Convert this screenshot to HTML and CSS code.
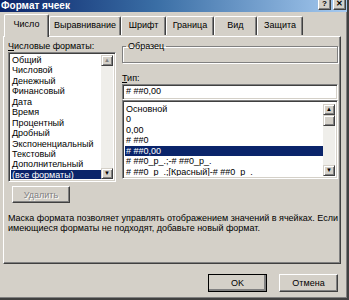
FILE: index.html
```html
<!DOCTYPE html>
<html lang="ru">
<head>
    <meta charset="UTF-8">
    <title>Формат ячеек</title>
    <link rel="stylesheet" href="styles.css">
</head>
<body>
<div class="window">
    <!-- Заголовок окна -->
    <div class="titlebar">
        <span class="title">Формат ячеек</span>
        <div class="tb-btns">
            <span class="tb-btn">?</span>
            <span class="tb-btn">✕</span>
        </div>
    </div>

    <!-- Вкладки -->
    <div class="tabs">
        <div class="tab active" style="width: 45px">Число</div>
        <div class="tab" style="width: 72px">Выравнивание</div>
        <div class="tab" style="width: 45px">Шрифт</div>
        <div class="tab" style="width: 48px">Граница</div>
        <div class="tab" style="width: 43px">Вид</div>
        <div class="tab" style="width: 46px">Защита</div>
    </div>

    <div class="panel">
        <div class="cols">
            <div class="left">
                <div class="label"><u>Ч</u>исловые форматы:</div>
                <div class="listbox sunken cat-list">
                    <ul class="items">
                        <li>Общий</li>
                        <li>Числовой</li>
                        <li>Денежный</li>
                        <li>Финансовый</li>
                        <li>Дата</li>
                        <li>Время</li>
                        <li>Процентный</li>
                        <li>Дробный</li>
                        <li>Экспоненциальный</li>
                        <li>Текстовый</li>
                        <li>Дополнительный</li>
                        <li class="sel">(все форматы)</li>
                    </ul>
                    <div class="vscroll">
                        <span class="arrow disabled">▲</span>
                        <span class="track"></span>
                        <span class="arrow">▼</span>
                    </div>
                </div>
                <button class="btn del" disabled>Удалить</button>
            </div>

            <div class="right">
                <fieldset class="sample">
                    <legend>Образец</legend>
                </fieldset>
                <div class="label type-label"><u>Т</u>ип:</div>
                <div class="input sunken"># ##0,00</div>
                <div class="listbox sunken fmt-list">
                    <ul class="items">
                        <li>Основной</li>
                        <li>0</li>
                        <li>0,00</li>
                        <li># ##0</li>
                        <li class="sel"># ##0,00</li>
                        <li># ##0_р_.;-# ##0_р_.</li>
                        <li># ##0_р_.;[Красный]-# ##0_р_.</li>
                    </ul>
                    <div class="vscroll">
                        <span class="arrow">▲</span>
                        <span class="thumb"></span>
                        <span class="track"></span>
                        <span class="arrow">▼</span>
                    </div>
                </div>
            </div>
        </div>

        <p class="desc">Маска формата позволяет управлять отображением значений в ячейках. Если имеющиеся форматы не подходят, добавьте новый формат.</p>
    </div>

    <div class="actions">
        <button class="btn default">OK</button>
        <button class="btn">Отмена</button>
    </div>
</div>
</body>
</html>
```

FILE: styles.css
```css
body {
    margin: 0;
    font-family: "Liberation Sans", Arial, sans-serif;
    font-size: 9px;
    color: #000;
}

.window {
    width: 347px;
    height: 298px;
    background-color: #d4d0c8;
    border-right: 2px solid #404040;
    border-bottom: 2px solid #404040;
    box-shadow: inset -1px -1px #808080;
    display: flex;
    flex-direction: column;
    overflow: hidden;
}

/* заголовок */
.titlebar {
    height: 12px;
    flex-shrink: 0;
    background: linear-gradient(to right, #0a246a, #3a6ea5 45%, #a6caf0);
    display: flex;
    justify-content: space-between;
    align-items: flex-start;
    overflow: hidden;
}

.title {
    color: white;
    font-weight: bold;
    font-size: 10px;
    line-height: 11px;
    padding-left: 1px;
}

.tb-btns {
    display: flex;
    gap: 2px;
    padding-right: 1px;
}

.tb-btn {
    width: 11px;
    height: 9px;
    background-color: #d4d0c8;
    border-right: 1px solid #404040;
    border-bottom: 1px solid #404040;
    border-left: 1px solid #fff;
    box-shadow: inset -1px -1px #808080;
    font-size: 8px;
    font-weight: bold;
    line-height: 8px;
    text-align: center;
    color: #000;
}

/* вкладки */
.tabs {
    display: flex;
    align-items: flex-end;
    height: 23px;
    margin-top: 1px;
    padding-left: 4px;
    flex-shrink: 0;
}

.tab {
    height: 19px;
    box-sizing: border-box;
    border-top: 1px solid #fff;
    border-left: 1px solid #fff;
    border-right: 1px solid #404040;
    box-shadow: inset -1px 0 #808080;
    border-radius: 2px 2px 0 0;
    text-align: center;
    line-height: 17px;
    margin-bottom: 1px;
    white-space: nowrap;
}

.tab.active {
    height: 23px;
    line-height: 19px;
    background-color: #d4d0c8;
    margin-bottom: -1px;
    position: relative;
    z-index: 1;
}

/* панель вкладки */
.panel {
    height: 228px;
    margin: 0 6px 0 3px;
    box-sizing: border-box;
    border-top: 1px solid #fff;
    border-left: 1px solid #fff;
    border-right: 1px solid #404040;
    border-bottom: 1px solid #404040;
    box-shadow: inset -1px -1px #808080;
    padding: 4px 2px 0 4px;
    flex-shrink: 0;
}

.cols {
    display: flex;
    gap: 6px;
}

.left {
    width: 108px;
    display: flex;
    flex-direction: column;
}

.right {
    flex: 1;
    display: flex;
    flex-direction: column;
}

.label {
    line-height: 10px;
    height: 10px;
    margin-bottom: 1px;
}

.sunken {
    box-sizing: border-box;
    border: 1px solid;
    border-color: #808080 #fff #fff #808080;
    box-shadow: inset 1px 1px #404040, inset -1px -1px #d4d0c8;
    background-color: #fff;
}

.listbox {
    display: flex;
    padding: 2px;
}

.cat-list {
    height: 130px;
}

.items {
    list-style: none;
    margin: 0;
    padding: 0;
    flex: 1;
    overflow: hidden;
}

.items li {
    height: 10.45px;
    line-height: 10.45px;
    padding-left: 1px;
    white-space: nowrap;
}

.items li.sel {
    background-color: #0a246a;
    color: #fff;
}

.vscroll {
    width: 12px;
    display: flex;
    flex-direction: column;
}

.vscroll .arrow,
.vscroll .thumb {
    height: 11px;
    box-sizing: border-box;
    background-color: #d4d0c8;
    border: 1px solid;
    border-color: #d4d0c8 #404040 #404040 #d4d0c8;
    box-shadow: inset 1px 1px #fff, inset -1px -1px #808080;
    font-size: 6px;
    line-height: 9px;
    text-align: center;
}

.vscroll .arrow.disabled {
    color: #808080;
}

.vscroll .track {
    flex: 1;
    background-color: #efeeea;
}

.btn {
    font-family: "Liberation Sans", Arial, sans-serif;
    font-size: 9px;
    background-color: #d4d0c8;
    color: #000;
    border: 1px solid;
    border-color: #fff #404040 #404040 #fff;
    box-shadow: inset -1px -1px #808080;
    padding: 0;
}

.btn.del {
    width: 58px;
    height: 17px;
    margin: 4px 0 0 4px;
}

.btn:disabled {
    color: #808080;
    text-shadow: 1px 1px #fff;
}

.sample {
    margin: 0;
    padding: 0;
    height: 22px;
    box-sizing: border-box;
    border: 1px solid #808080;
    box-shadow: 1px 1px #fff, inset 1px 1px #fff;
}

.sample legend {
    margin-left: 3px;
    padding: 0 2px;
    line-height: 10px;
    font-size: 9px;
}

.type-label {
    margin-top: 10px;
}

.input {
    height: 16px;
    line-height: 12px;
    padding-left: 3px;
}

.fmt-list {
    height: 79px;
    padding-top: 3px;
}

.desc {
    margin: 10px 0 0 0;
    line-height: 10px;
}

.actions {
    display: flex;
    justify-content: flex-end;
    gap: 12px;
    margin-top: 10px;
    padding-right: 9px;
}

.actions .btn {
    width: 59px;
    height: 18px;
}

.actions .btn.default {
    outline: 1px solid #000;
    outline-offset: -1px;
    border-color: #fff #404040 #404040 #fff;
    box-shadow: inset -2px -2px #808080;
}
```
